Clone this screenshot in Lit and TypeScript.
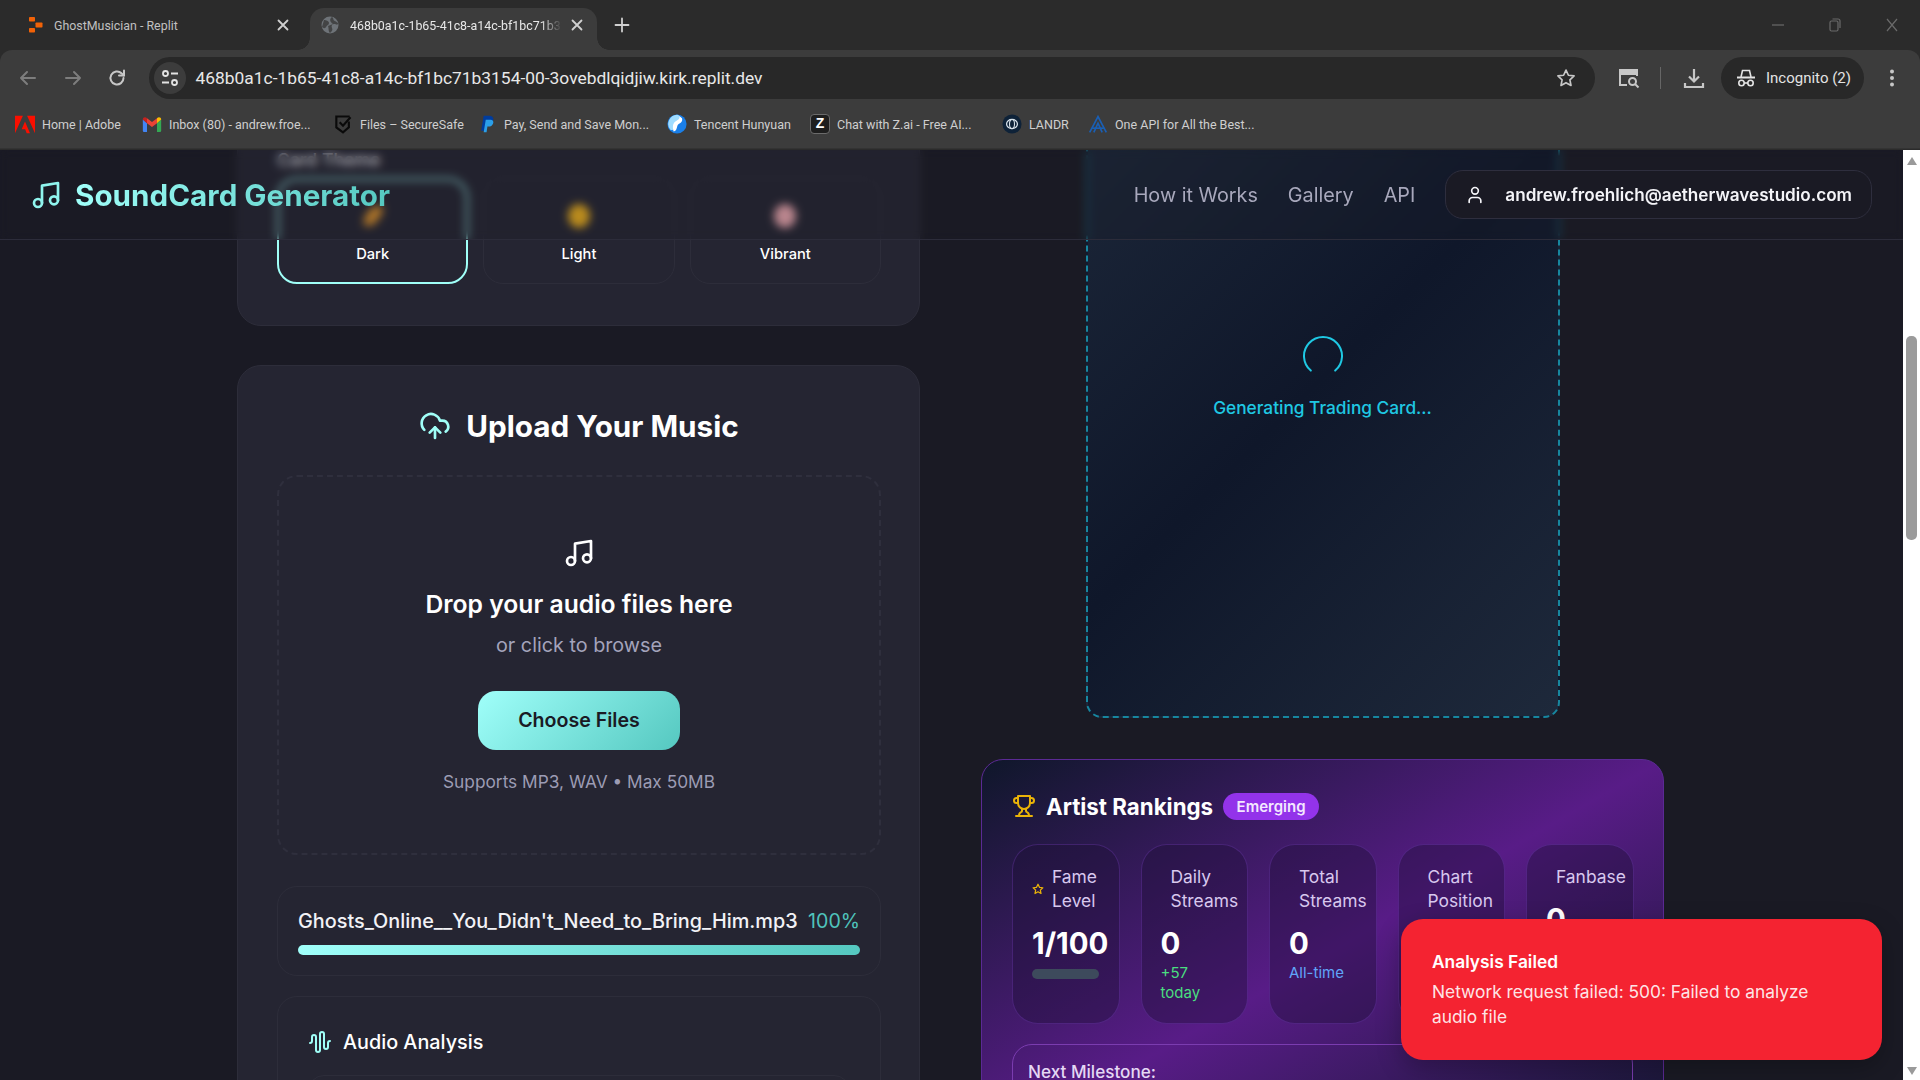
import { LitElement, html, css } from 'lit';
import { customElement } from 'lit/decorators.js';

const musicIcon = (size: number) => html`<svg width=${size} height=${size} viewBox="0 0 24 24" fill="none" stroke="currentColor" stroke-width="2" stroke-linecap="round" stroke-linejoin="round"><path d="M9 18V5l12-2v13"/><circle cx="6" cy="18" r="3"/><circle cx="18" cy="16" r="3"/></svg>`;

const bookmarks = [
  {
    width: 127,
    label: 'Home | Adobe',
    icon: html`<svg width="20" height="20" viewBox="0 0 24 24"><path fill="#fa0f00" d="M9.500 2H0v21zM14.500 2H24v21zM12 9 18 23h-4l-1.800-4.600H8z"/></svg>`,
  },
  {
    width: 191,
    label: 'Inbox (80) - andrew.froe...',
    icon: html`<svg width="20" height="20" viewBox="0 0 24 24" fill="none"><path fill="#4285f4" d="M1 6.500V20a1.500 1.500 0 0 0 1.500 1.500H6V11z"/><path fill="#34a853" d="M23 6.500V20a1.500 1.500 0 0 1-1.500 1.500H18V11z"/><path fill="#ea4335" d="M6 11v-6l6 4.500L18 5v6l-6 4.500z"/><path fill="#c5221f" d="M1 6.500C1 4 4 3 6 5v6z"/><path fill="#fbbc04" d="M23 6.500C23 4 20 3 18 5v6z"/></svg>`,
  },
  {
    width: 144,
    label: 'Files – SecureSafe',
    icon: html`<svg width="20" height="20" viewBox="0 0 24 24" fill="none" stroke="#0a0a0a" stroke-width="2.600"><path d="M20 3H4v13l8 6 7-6V9"/><path d="m8 10 4 4 9-10"/></svg>`,
  },
  {
    width: 190,
    label: 'Pay, Send and Save Mon...',
    icon: html`<svg width="20" height="20" viewBox="0 0 24 24"><path fill="#003c9d" d="M8 2h7c5 0 6 5 3 8-1.500 1.500-4 2-7 2l-1.500 8H5z"/><path fill="#2b9fe8" d="M10.500 7h6c4 0 4 5 1 7-1 1-3 1-5 1l-1 7H8z"/></svg>`,
  },
  {
    width: 143,
    label: 'Tencent Hunyuan',
    icon: html`<svg width="20" height="20" viewBox="0 0 24 24"><circle cx="12" cy="12" r="11.500" fill="#1a7fe8"/><path fill="#9fdcff" d="M12 1a11 11 0 0 0-8 18c6 2 3-6 7-8 3-1.500 6-3 5-6-.6-2-2-4-4-4"/><path fill="#fff" d="M8 21c5-1 3-7 6-9 3-2 5-3 4-7-1-1-2-2-4-3 3 3-1 5-4 7-4 3-3 9-2 12"/></svg>`,
  },
  {
    width: 192,
    label: 'Chat with Z.ai - Free AI...',
    icon: html`<span class="z-logo">Z</span>`,
  },
  {
    width: 86,
    label: 'LANDR',
    icon: html`<svg width="20" height="20" viewBox="0 0 24 24" fill="none"><circle cx="12" cy="12" r="11.500" fill="#0e2238"/><ellipse cx="12" cy="12" rx="6.500" ry="5.500" stroke="#d8e2ea" stroke-width="1.500"/><ellipse cx="12" cy="12" rx="3" ry="5.500" stroke="#d8e2ea" stroke-width="1.300"/></svg>`,
  },
  {
    width: 190,
    label: 'One API for All the Best...',
    icon: html`<svg width="20" height="20" viewBox="0 0 24 24" fill="none" stroke="#1a5fb4" stroke-width="2"><path d="M2 22 12 3l10 19"/><path d="M7 22 12 11l5 11"/><path d="M5 17h14"/></svg>`,
  },
];

const stats = [
  { label: 'Fame\nLevel', value: '1/100', star: true, bar: true },
  { label: 'Daily\nStreams', value: '0', sub: '+57\ntoday', subClass: 'green' },
  { label: 'Total\nStreams', value: '0', sub: 'All-time', subClass: 'blue' },
  { label: 'Chart\nPosition', value: '' },
  { label: 'Fanbase', value: '0' },
];

@customElement('app-root')
export class AppRoot extends LitElement {
  static styles = css`
    :host {
      display: flex;
      flex-direction: column;
      width: 1920px;
      height: 1080px;
      overflow: hidden;
      font-family: Inter, 'Noto Sans', sans-serif;
      background: #1a1a24;
      color: #fff;
    }
    * {
      box-sizing: border-box;
    }
    svg {
      display: block;
      flex: none;
    }

    /* browser chrome */
    .chrome {
      flex: none;
      height: 150px;
      background: #2b2b2b;
      font-family: Roboto, 'Open Sans', sans-serif;
    }
    .tabs {
      display: flex;
      height: 50px;
      padding-top: 8px;
    }
    .tab {
      display: flex;
      align-items: center;
      height: 42px;
      width: 287px;
      padding: 0 0 8px 20px;
      font-size: 12.400px;
      color: #c0c0c0;
      position: relative;
    }
    .tab.first {
      width: 310px;
      padding-left: 29px;
    }
    .tab.active {
      background: #3c3c3c;
      border-radius: 14px 14px 0 0;
      color: #e8e8e8;
      padding-left: 11px;
    }
    .tab.active::before,
    .tab.active::after {
      content: '';
      position: absolute;
      bottom: 0;
      width: 12px;
      height: 12px;
      background: radial-gradient(circle at 0 0, #2b2b2b 11.500px, #3c3c3c 12px);
    }
    .tab.active::before {
      left: -12px;
    }
    .tab.active::after {
      right: -12px;
      transform: scaleX(-1);
    }
    .tab-title {
      margin-left: 11px;
      width: 212px;
      white-space: nowrap;
      overflow: hidden;
    }
    .first .tab-title {
      margin-left: 11px;
      width: 214px;
    }
    .active .tab-title {
      -webkit-mask-image: linear-gradient(90deg, #000 90%, transparent);
      mask-image: linear-gradient(90deg, #000 90%, transparent);
    }
    .close {
      margin-left: 8px;
      color: #d0d0d0;
    }
    .plus {
      margin: 9px 0 0 17px;
      color: #d0d0d0;
    }
    .win {
      margin-left: auto;
      display: flex;
      align-items: center;
      gap: 45px;
      padding-right: 22px;
      color: #6a6a6a;
      height: 34px;
    }
    .toolbar {
      display: flex;
      align-items: center;
      height: 50px;
      background: #3c3c3c;
      border-radius: 12px 12px 0 0;
      padding: 7px 0 1px 5px;
      color: #c7c7c7;
    }
    .tool {
      width: 45px;
      display: flex;
      justify-content: center;
    }
    .tool.dim {
      color: #7d7d7d;
    }
    .tool.reload {
      margin-left: -1px;
      margin-right: 1px;
    }
    .url {
      display: flex;
      align-items: center;
      width: 1446px;
      height: 42px;
      margin-left: 9px;
      border-radius: 21px;
      background: #282828;
      padding: 0 19px 0 5px;
    }
    .site {
      width: 32px;
      height: 32px;
      border-radius: 50%;
      background: #3c3c3c;
      display: flex;
      align-items: center;
      justify-content: center;
      color: #e3e3e3;
    }
    .url-text {
      margin-left: 9.500px;
      flex: 1;
      font-size: 17.400px;
      color: #e8e8e8;
      white-space: nowrap;
    }
    .ext {
      margin-left: 23px;
    }
    .divider {
      width: 1px;
      height: 22px;
      background: #666;
      margin: 0 22px 0 20px;
    }
    .incognito {
      display: flex;
      align-items: center;
      gap: 10px;
      width: 143px;
      height: 42px;
      margin-left: 16px;
      padding-left: 15px;
      border-radius: 21px;
      background: #282828;
      font-size: 15px;
      color: #e3e3e3;
    }
    .dots {
      margin-left: 21px;
    }
    .bookmarks {
      display: flex;
      align-items: center;
      height: 49px;
      background: #3c3c3c;
      padding: 0 0 0 15px;
      border-bottom: 1px solid #333;
    }
    .bm {
      display: flex;
      align-items: center;
      gap: 7px;
      font-size: 12.500px;
      color: #cfcfcf;
      white-space: nowrap;
    }
    .z-logo {
      width: 20px;
      height: 20px;
      flex: none;
      border: 1.500px solid #6b6b6b;
      border-radius: 4px;
      background: #1e1e1e;
      color: #fff;
      font: 700 14px/17px 'Liberation Sans', sans-serif;
      text-align: center;
    }

    /* page */
    .viewport {
      flex: 1;
      min-height: 0;
      display: flex;
    }
    .pane {
      position: relative;
      flex: 1;
      min-width: 0;
      overflow: hidden;
    }
    .scrollbar {
      flex: none;
      width: 17px;
      background: #fff;
      display: flex;
      flex-direction: column;
      align-items: center;
      padding: 7px 0 5px;
    }
    .arrow-up,
    .arrow-down {
      width: 0;
      height: 0;
      border-left: 5.500px solid transparent;
      border-right: 5.500px solid transparent;
    }
    .arrow-up {
      border-bottom: 8px solid #9a9a9a;
    }
    .arrow-down {
      margin-top: auto;
      border-top: 8px solid #9a9a9a;
    }
    .thumb {
      width: 11px;
      height: 204px;
      margin-top: 171px;
      border-radius: 5px;
      background: #9b9b9b;
    }
    .grid {
      display: grid;
      grid-template-columns: 683px 683px;
      column-gap: 61px;
      margin: -112px 0 0 237px;
    }
    .col {
      display: flex;
      flex-direction: column;
    }
    .card {
      background: #252532;
      border: 1px solid #2d2d3a;
      border-radius: 24px;
      padding: 40px 38px 40px 39px;
    }
    .theme-card {
      height: 288px;
      padding-top: 108.500px;
    }
    .theme-label {
      font-size: 17.600px;
      font-weight: 500;
      line-height: 24px;
      color: #e8e8ee;
      margin-bottom: 6.500px;
    }
    .themes {
      display: grid;
      grid-template-columns: repeat(3, 1fr);
      gap: 15px;
    }
    .theme {
      height: 106px;
      border: 1px solid #2d2d3a;
      border-radius: 20px;
      display: flex;
      flex-direction: column;
      align-items: center;
      padding-top: 25px;
      font-size: 14.700px;
      line-height: 18px;
      font-weight: 500;
    }
    .theme.selected {
      border: 2px solid #a0fff8;
      padding-top: 24px;
    }
    .swatch {
      width: 22px;
      height: 24px;
      border-radius: 50%;
      margin-bottom: 17px;
    }
    .swatch.moon {
      width: 14px;
      border-radius: 70% 20% 70% 30%;
      background: #d98f2a;
      transform: rotate(25deg);
    }
    .swatch.sun {
      background: #eeb01c;
    }
    .swatch.pink {
      background: #eda8b0;
    }
    .upload-card {
      margin-top: 39px;
      height: 800px;
    }
    .upload-title {
      display: flex;
      justify-content: center;
      align-items: center;
      gap: 15px;
      font-size: 29.700px;
      font-weight: 700;
      line-height: 40px;
    }
    .teal {
      color: #a0fff8;
    }
    .drop {
      height: 380px;
      margin-top: 29px;
      border: 2px dashed #2f2f3d;
      border-radius: 20px;
      display: flex;
      flex-direction: column;
      align-items: center;
      padding-top: 60px;
    }
    .drop-title {
      margin-top: 19px;
      font-size: 24.700px;
      font-weight: 600;
      line-height: 32px;
    }
    .drop-sub {
      margin-top: 10.500px;
      font-size: 19.800px;
      line-height: 28px;
      color: #a3a3bb;
    }
    .choose {
      margin-top: 32px;
      width: 202px;
      height: 59px;
      border-radius: 18px;
      background: linear-gradient(135deg, #a0fffa, #55c8c0);
      color: #1a1a24;
      font-size: 19.600px;
      font-weight: 600;
      display: flex;
      align-items: center;
      justify-content: center;
    }
    .formats {
      margin-top: 20px;
      font-size: 17.300px;
      line-height: 24px;
      color: #9c9cb4;
    }
    .file {
      margin-top: 31px;
      height: 90px;
      border: 1px solid #2d2d3a;
      border-radius: 20px;
      padding: 20px;
    }
    .file-row {
      display: flex;
      justify-content: space-between;
      font-size: 19.850px;
      line-height: 28px;
      font-weight: 500;
      color: #f2f2f6;
    }
    .pct {
      font-size: 19.600px;
      font-weight: 400;
      color: #4fc3bc;
    }
    .bar {
      margin-top: 10px;
      height: 10px;
      border-radius: 5px;
      background: linear-gradient(90deg, #a0fffa, #55c8c0);
    }
    .analysis {
      margin-top: 20px;
      height: 200px;
      border: 1px solid #2d2d3a;
      border-radius: 20px;
      padding: 31px 30px;
    }
    .analysis-head {
      display: flex;
      align-items: center;
      gap: 11px;
      font-size: 19.800px;
      font-weight: 500;
      line-height: 28px;
    }
    .analysis-inner {
      margin-top: 19px;
      height: 100px;
      border: 1px solid #2d2d3a;
      border-radius: 16px;
    }
    .preview {
      width: 474px;
      height: 680px;
      align-self: center;
      border: 2px dashed #17869f;
      border-radius: 16px;
      background: linear-gradient(135deg, #1e293b, #0f172a 50%, #1e293b);
      display: flex;
      flex-direction: column;
      align-items: center;
      justify-content: center;
      padding-top: 2px;
      color: #1fc8e3;
    }
    .gen-text {
      margin-top: 18.500px;
      font-size: 17.300px;
      font-weight: 500;
      line-height: 28px;
    }
    .rankings {
      margin-top: 41px;
      height: 396px;
      border: 1px solid #5b2a94;
      border-radius: 22px;
      background: linear-gradient(to bottom right, #0f172a, #581c87 50%, #0f172a);
      padding: 32px 30px;
    }
    .rank-head {
      display: flex;
      align-items: center;
      height: 28px;
      font-size: 22.300px;
      font-weight: 700;
      color: #fff;
    }
    .rank-head svg {
      color: #eab308;
      margin-right: 10px;
    }
    .badge {
      margin-left: 10px;
      padding: 0 13.500px;
      height: 27px;
      border-radius: 14px;
      background: #9333ea;
      font-size: 15px;
      font-weight: 600;
      line-height: 27px;
      color: #f3e8ff;
    }
    .stats {
      display: grid;
      grid-template-columns: repeat(5, 107.500px);
      column-gap: 21px;
      margin-top: 24px;
      height: 179px;
    }
    .stat {
      border: 1px solid rgba(147, 81, 234, 0.25);
      border-radius: 26px;
      background: rgba(30, 15, 55, 0.4);
      padding: 20px 19px;
    }
    .stat-label {
      display: flex;
      align-items: center;
      gap: 8px;
      padding-left: 10px;
      font-size: 17.400px;
      line-height: 24px;
      color: #d8c8ee;
      white-space: pre-line;
    }
    .stat-label.has-star {
      padding-left: 0;
    }
    .stat-label svg {
      color: #eab308;
    }
    .stat-value {
      margin-top: 12px;
      font-size: 29.400px;
      font-weight: 700;
      line-height: 38px;
      white-space: nowrap;
    }
    .stat-bar {
      margin-top: 6px;
      width: 67px;
      height: 10px;
      border-radius: 5px;
      background: #3d4a5c;
    }
    .stat-sub {
      font-size: 15px;
      line-height: 20px;
      white-space: pre-line;
    }
    .green {
      color: #4ade80;
    }
    .blue {
      color: #60a5fa;
    }
    .milestone {
      margin-top: 21px;
      height: 100px;
      border: 1px solid #7b3cb0;
      border-radius: 20px;
      padding: 15px 15px;
      font-size: 17.140px;
      font-weight: 500;
      line-height: 24px;
      color: #e4d8f4;
    }

    /* overlays */
    .header {
      position: absolute;
      top: 0;
      left: 0;
      right: 0;
      height: 90px;
      display: flex;
      align-items: center;
      padding: 0 31px 0 30px;
      border-bottom: 1px solid #2c2c3a;
      background: rgba(26, 26, 36, 0.25);
      backdrop-filter: blur(4px);
    }
    .logo {
      display: flex;
      align-items: center;
      gap: 13px;
      color: #90f5ee;
      font-size: 29.650px;
      font-weight: 700;
    }
    .logo-text {
      background: linear-gradient(90deg, #a0fffa, #55c8c0);
      -webkit-background-clip: text;
      background-clip: text;
      color: transparent;
    }
    .nav {
      margin-left: auto;
      display: flex;
      align-items: center;
      gap: 30px;
      font-size: 19.800px;
      color: #a8a8bc;
    }
    .user {
      display: flex;
      align-items: center;
      gap: 20px;
      height: 49px;
      padding: 0 19px 0 19px;
      border: 1px solid #2e2e3e;
      border-radius: 18px;
      background: #1a1a24;
      color: #f4f4f8;
      font-size: 17.140px;
      font-weight: 600;
    }
    .toast {
      position: absolute;
      right: 21px;
      bottom: 20px;
      width: 481px;
      height: 141px;
      padding: 30px 31px;
      border-radius: 22px;
      background: #f42331;
      box-shadow: 0 8px 24px rgba(0, 0, 0, 0.25);
      font-size: 17.350px;
      line-height: 25px;
    }
    .toast-title {
      font-weight: 600;
      margin-bottom: 5px;
    }
    .toast-body {
      color: rgba(255, 255, 255, 0.9);
    }
  `;

  private renderChrome() {
    return html`
      <div class="chrome">
        <div class="tabs">
          <div class="tab first">
            <svg width="14" height="16" viewBox="0 0 14 16" fill="#f26207"><rect x="0" y="0" width="6" height="4.500" rx=".8"/><rect x="6.500" y="5.500" width="7" height="5" rx=".8"/><rect x="0" y="11" width="6" height="4.500" rx=".8"/></svg>
            <span class="tab-title">GhostMusician - Replit</span>
            <svg class="close" width="14" height="14" viewBox="0 0 14 14" stroke="currentColor" stroke-width="1.800" stroke-linecap="round"><path d="m2.500 2.500 9 9M11.500 2.500l-9 9"/></svg>
          </div>
          <div class="tab active">
            <svg width="18" height="18" viewBox="0 0 18 18"><circle cx="9" cy="9" r="8.500" fill="#6e7378"/><path fill="#3c3c3c" d="M3 4c2 0 5 1 5 3s-2 2-3 4-3 1-4 0zM11 1c2 1 1 4 3 4l3 2c0 3-2 1-4 1s-3 2-2 4 0 3-2 5c-2-2-1-5-2-7l5-2C9 6 8 3 11 1z" opacity=".85"/></svg>
            <span class="tab-title">468b0a1c-1b65-41c8-a14c-bf1bc71b3154-00-3ovebdlqidjiw</span>
            <svg class="close" width="14" height="14" viewBox="0 0 14 14" stroke="currentColor" stroke-width="1.800" stroke-linecap="round"><path d="m2.500 2.500 9 9M11.500 2.500l-9 9"/></svg>
          </div>
          <svg class="plus" width="16" height="16" viewBox="0 0 16 16" stroke="currentColor" stroke-width="1.800" stroke-linecap="round"><path d="M8 1.500v13M1.500 8h13"/></svg>
          <div class="win">
            <svg width="12" height="12" viewBox="0 0 12 12" stroke="currentColor" stroke-width="1.200"><path d="M0 6h12"/></svg>
            <svg width="12" height="14" viewBox="0 0 12 14" fill="none" stroke="currentColor" stroke-width="1.200"><rect x="1" y="3" width="8" height="10" rx="1.500"/><path d="M3.500 1H9a2 2 0 0 1 2 2v7"/></svg>
            <svg width="12" height="14" viewBox="0 0 12 14" stroke="currentColor" stroke-width="1.200"><path d="m1 1 10 12M11 1 1 13"/></svg>
          </div>
        </div>
        <div class="toolbar">
          <div class="tool dim"><svg width="20" height="20" viewBox="0 0 20 20" fill="none" stroke="currentColor" stroke-width="2" stroke-linecap="round" stroke-linejoin="round"><path d="M17 10H3M9 4l-6 6 6 6"/></svg></div>
          <div class="tool dim"><svg width="20" height="20" viewBox="0 0 20 20" fill="none" stroke="currentColor" stroke-width="2" stroke-linecap="round" stroke-linejoin="round"><path d="M3 10h14M11 4l6 6-6 6"/></svg></div>
          <div class="tool reload"><svg width="20" height="20" viewBox="0 0 20 20" fill="none" stroke="currentColor" stroke-width="2" stroke-linecap="round" stroke-linejoin="round"><path d="M16.500 10a6.500 6.500 0 1 1-2-4.700L17 7.500"/><path d="M17 2.500v5h-5"/></svg></div>
          <div class="url">
            <div class="site"><svg width="20" height="20" viewBox="0 0 20 20" fill="none" stroke="currentColor" stroke-width="1.800"><circle cx="5.500" cy="5.500" r="2.500"/><path d="M11 5.500h7M2 14.500h7"/><circle cx="14.500" cy="14.500" r="2.500"/></svg></div>
            <span class="url-text">468b0a1c-1b65-41c8-a14c-bf1bc71b3154-00-3ovebdlqidjiw.kirk.replit.dev</span>
            <svg width="20" height="20" viewBox="0 0 24 24" fill="none" stroke="#c7c7c7" stroke-width="2" stroke-linejoin="round"><path d="m12 2.500 2.900 6.200 6.800.8-5 4.700 1.300 6.800-6-3.400-6 3.400 1.300-6.800-5-4.700 6.800-.8z"/></svg>
          </div>
          <svg class="ext" width="22" height="22" viewBox="0 0 22 22" fill="none" stroke="currentColor" stroke-width="2"><path d="M9 18H2V3h17v6"/><path d="M2 3h17v4H2z" fill="currentColor"/><circle cx="14.500" cy="14.500" r="3.500"/><path d="m17 17 3.500 3.500"/></svg>
          <div class="divider"></div>
          <svg width="22" height="22" viewBox="0 0 22 22" fill="none" stroke="currentColor" stroke-width="2.200"><path d="M11 2v12M6 9.500l5 5 5-5"/><path d="M2 16v4h18v-4"/></svg>
          <div class="incognito">
            <svg width="20" height="20" viewBox="0 0 20 20" fill="none" stroke="currentColor" stroke-width="1.600"><path d="M5 9 6.500 2.500h7L15 9"/><path d="M1 9.500h18" stroke-width="2"/><circle cx="5.500" cy="15" r="2.700"/><circle cx="14.500" cy="15" r="2.700"/><path d="M8 15h4"/></svg>
            <span>Incognito (2)</span>
          </div>
          <svg class="dots" width="14" height="20" viewBox="0 0 14 20" fill="currentColor"><circle cx="7" cy="3.500" r="2"/><circle cx="7" cy="10" r="2"/><circle cx="7" cy="16.500" r="2"/></svg>
        </div>
        <div class="bookmarks">
          ${bookmarks.map(
            (b) => html`<div class="bm" style="width:${b.width}px">${b.icon}<span>${b.label}</span></div>`,
          )}
        </div>
      </div>
    `;
  }

  private renderLeft() {
    return html`
      <div class="col">
        <div class="card theme-card">
          <div class="theme-label">Card Theme</div>
          <div class="themes">
            <div class="theme selected"><span class="swatch moon"></span>Dark</div>
            <div class="theme"><span class="swatch sun"></span>Light</div>
            <div class="theme"><span class="swatch pink"></span>Vibrant</div>
          </div>
        </div>
        <div class="card upload-card">
          <div class="upload-title">
            <svg class="teal" width="32" height="32" viewBox="0 0 24 24" fill="none" stroke="currentColor" stroke-width="2" stroke-linecap="round" stroke-linejoin="round"><path d="M12 13v8"/><path d="M4 14.900A7 7 0 1 1 15.700 8h1.800a4.500 4.500 0 0 1 2.500 8.200"/><path d="m8 17 4-4 4 4"/></svg>
            <span>Upload Your Music</span>
          </div>
          <div class="drop">
            ${musicIcon(32)}
            <div class="drop-title">Drop your audio files here</div>
            <div class="drop-sub">or click to browse</div>
            <div class="choose">Choose Files</div>
            <div class="formats">Supports MP3, WAV • Max 50MB</div>
          </div>
          <div class="file">
            <div class="file-row">
              <span>Ghosts_Online__You_Didn't_Need_to_Bring_Him.mp3</span>
              <span class="pct">100%</span>
            </div>
            <div class="bar"></div>
          </div>
          <div class="analysis">
            <div class="analysis-head">
              <svg class="teal" width="24" height="24" viewBox="0 0 24 24" fill="none" stroke="currentColor" stroke-width="2" stroke-linecap="round" stroke-linejoin="round"><path d="M2 13a2 2 0 0 0 2-2V7a2 2 0 0 1 4 0v13a2 2 0 0 0 4 0V4a2 2 0 0 1 4 0v13a2 2 0 0 0 4 0v-4a2 2 0 0 1 2-2"/></svg>
              <span>Audio Analysis</span>
            </div>
            <div class="analysis-inner"></div>
          </div>
        </div>
      </div>
    `;
  }

  private renderRight() {
    return html`
      <div class="col">
        <div class="preview">
          <svg width="40" height="40" viewBox="0 0 40 40" fill="none" stroke="currentColor" stroke-width="2" stroke-linecap="round"><path d="M7.800 34.600A19 19 0 1 1 32.200 34.600"/></svg>
          <div class="gen-text">Generating Trading Card...</div>
        </div>
        <div class="rankings">
          <div class="rank-head">
            <svg width="24" height="24" viewBox="0 0 24 24" fill="none" stroke="currentColor" stroke-width="2" stroke-linecap="round" stroke-linejoin="round"><path d="M6 9H4.500a2.500 2.500 0 0 1 0-5H6"/><path d="M18 9h1.500a2.500 2.500 0 0 0 0-5H18"/><path d="M4 22h16"/><path d="M10 14.660V17c0 .55-.47.98-.97 1.210C7.850 18.750 7 20.240 7 22"/><path d="M14 14.660V17c0 .55.47.98.97 1.210C16.150 18.750 17 20.240 17 22"/><path d="M18 2H6v7a6 6 0 0 0 12 0V2Z"/></svg>
            <span>Artist Rankings</span>
            <span class="badge">Emerging</span>
          </div>
          <div class="stats">
            ${stats.map(
              (s) => html`
                <div class="stat">
                  <div class="stat-label ${s.star ? 'has-star' : ''}">
                    ${s.star
                      ? html`<svg width="12" height="12" viewBox="0 0 24 24" fill="none" stroke="currentColor" stroke-width="2.500" stroke-linejoin="round"><path d="m12 2.500 2.900 6.200 6.800.8-5 4.700 1.300 6.800-6-3.400-6 3.400 1.300-6.800-5-4.700 6.800-.8z"/></svg>`
                      : ''}
                    <span>${s.label}</span>
                  </div>
                  <div class="stat-value">${s.value}</div>
                  ${s.bar ? html`<div class="stat-bar"></div>` : ''}
                  ${s.sub ? html`<div class="stat-sub ${s.subClass}">${s.sub}</div>` : ''}
                </div>
              `,
            )}
          </div>
          <div class="milestone">Next Milestone:</div>
        </div>
      </div>
    `;
  }

  render() {
    return html`
      ${this.renderChrome()}
      <div class="viewport">
        <div class="pane">
          <div class="grid">${this.renderLeft()}${this.renderRight()}</div>
          <div class="header">
            <div class="logo">${musicIcon(32)}<span class="logo-text">SoundCard Generator</span></div>
            <div class="nav">
              <span>How it Works</span>
              <span>Gallery</span>
              <span>API</span>
              <div class="user">
                <svg width="20" height="20" viewBox="0 0 24 24" fill="none" stroke="currentColor" stroke-width="2" stroke-linecap="round"><circle cx="12" cy="7" r="4"/><path d="M19 21v-2a4 4 0 0 0-4-4H9a4 4 0 0 0-4 4v2"/></svg>
                <span>andrew.froehlich@aetherwavestudio.com</span>
              </div>
            </div>
          </div>
          <div class="toast">
            <div class="toast-title">Analysis Failed</div>
            <div class="toast-body">Network request failed: 500: Failed to analyze audio file</div>
          </div>
        </div>
        <div class="scrollbar">
          <div class="arrow-up"></div>
          <div class="thumb"></div>
          <div class="arrow-down"></div>
        </div>
      </div>
    `;
  }
}
